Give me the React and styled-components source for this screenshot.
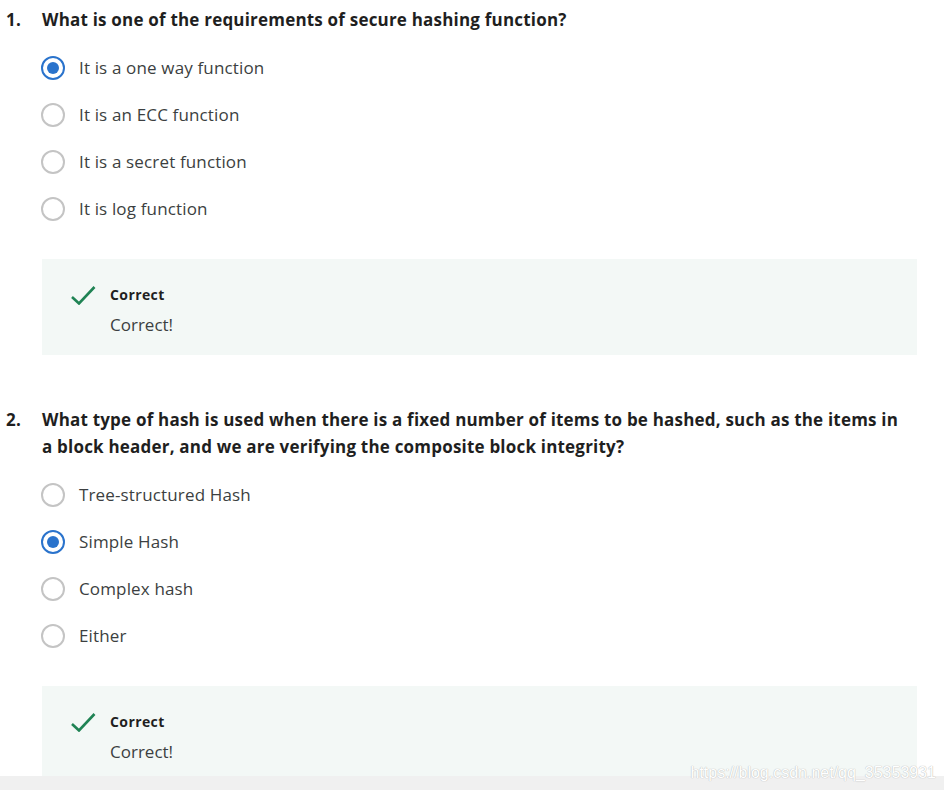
import React from 'react'
import styled, { createGlobalStyle } from 'styled-components'

const Global = createGlobalStyle`
  html, body {
    margin: 0;
    padding: 0;
    background: #fff;
  }
  body {
    font-family: 'Open Sans', 'Noto Sans', sans-serif;
    color: #1f1f1f;
  }
`

const Page = styled.div`
  position: relative;
  width: 944px;
  height: 790px;
  overflow: hidden;
  display: flex;
  flex-direction: column;
`
const Content = styled.div`
  height: 776px;
  overflow: hidden;
  padding-top: 6px;
  box-sizing: border-box;
`
const Footer = styled.div`
  height: 14px;
  background: #f0f0f0;
`
const Watermark = styled.div`
  position: absolute;
  right: 8px;
  bottom: 8px;
  font-family: 'Liberation Sans', Arial, sans-serif;
  font-size: 16px;
  color: #fff;
  text-shadow: 0 0 1px #b8b8b8, 0 0 1px #c8c8c8;
`
const Question = styled.div`
  margin-top: ${p => p.$first ? '0' : '51px'};
`
const Prompt = styled.div`
  display: flex;
  font-size: 17px;
  font-weight: 700;
  line-height: 27px;
  letter-spacing: 0.2px;
  color: #1f1f1f;
`
const Num = styled.div`
  width: 36px;
  padding-left: 6px;
  flex-shrink: 0;
`
const PromptText = styled.div`
  width: 864px;
`
const Options = styled.div`
  margin: 11px 0 0 41px;
  display: flex;
  flex-direction: column;
`
const Option = styled.div`
  height: 47px;
  display: flex;
  align-items: center;
  gap: 14px;
  font-size: 17px;
  letter-spacing: 0.15px;
  color: #3c3f41;
`
const Radio = styled.span`
  width: 24px;
  height: 24px;
  box-sizing: border-box;
  border-radius: 50%;
  border: 2px solid ${p => p.$on ? '#2a73cc' : '#c4c4c4'};
  display: flex;
  align-items: center;
  justify-content: center;
  &::after {
    content: '';
    width: 12px;
    height: 12px;
    border-radius: 50%;
    background: ${p => p.$on ? '#2a73cc' : 'transparent'};
  }
`
const Feedback = styled.div`
  margin: 27px 0 0 42px;
  width: 875px;
  height: 96px;
  background: #f3f8f6;
  box-sizing: border-box;
  padding: 26px 0 0 28px;
  display: flex;
  gap: 14px;
`
const Check = styled.svg`
  width: 26px;
  height: 20px;
  flex-shrink: 0;
`
const FeedbackBody = styled.div`
  display: flex;
  flex-direction: column;
  gap: 8px;
`
const Label = styled.div`
  font-size: 14px;
  font-weight: 700;
  line-height: 20px;
  letter-spacing: 0.4px;
  color: #1f1f1f;
`
const Message = styled.div`
  font-size: 17px;
  line-height: 24px;
  color: #3c3f41;
`

const questions = [
  {
    n: '1.',
    text: 'What is one of the requirements of secure hashing function?',
    options: ['It is a one way function', 'It is an ECC function', 'It is a secret function', 'It is log function'],
    pick: 0,
  },
  {
    n: '2.',
    text: 'What type of hash is used when there is a fixed number of items to be hashed, such as the items in a block header, and we are verifying the composite block integrity?',
    options: ['Tree-structured Hash', 'Simple Hash', 'Complex hash', 'Either'],
    pick: 1,
  },
]

export default () => {
  return (
    <Page>
      <Global />
      <Content>
        {questions.map((q, i) => (
          <Question key={q.n} $first={i === 0}>
            <Prompt>
              <Num>{q.n}</Num>
              <PromptText>{q.text}</PromptText>
            </Prompt>
            <Options>
              {q.options.map((o, j) => (
                <Option key={o}>
                  <Radio $on={j === q.pick} />
                  {o}
                </Option>
              ))}
            </Options>
            <Feedback>
              <Check viewBox='0 0 26 20'>
                <path d='M2 12 L9 18.5 L24.5 2' fill='none' stroke='#1f8354' strokeWidth='2.6' />
              </Check>
              <FeedbackBody>
                <Label>Correct</Label>
                <Message>Correct!</Message>
              </FeedbackBody>
            </Feedback>
          </Question>
        ))}
      </Content>
      <Footer />
      <Watermark>https://blog.csdn.net/qq_35353931</Watermark>
    </Page>
  )
}
